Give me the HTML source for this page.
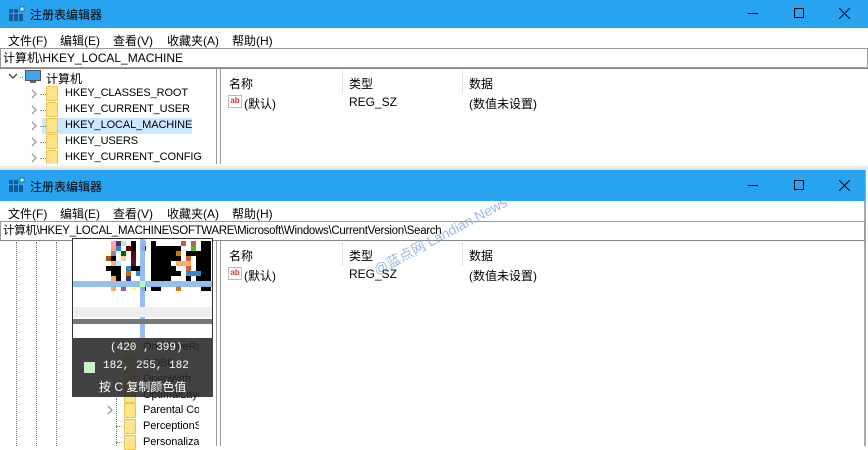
<!DOCTYPE html>
<html><head><meta charset="utf-8"><style>
*{margin:0;padding:0;box-sizing:border-box}
body{width:868px;height:446px;overflow:hidden;background:#fff;font-family:"Liberation Sans","Noto Sans CJK SC",sans-serif;font-size:12px;color:#000;position:relative}
.abs{position:absolute}
.title{background:#27a3ef;height:28px;color:#000}
.title .t{position:absolute;left:30px;top:6px;font-size:12px}
.menu span{position:absolute;top:4px}
.addr{border:1px solid #999;background:#fff;height:19px;white-space:nowrap;overflow:hidden;padding:1px 2px;line-height:16px}
.hdr{position:absolute;font-size:12px}
.sep{position:absolute;width:1px;background:#e5e5e5}
.folder{position:absolute;width:12px;height:15px;background:#fde38a;border:1px solid #e8c553;border-radius:1px}
.chev{position:absolute;width:8px;height:10px}
.dots{position:absolute;border-top:1px dotted #888;width:6px}
.vdots{position:absolute;border-left:1px dotted #777}
.tx{position:absolute;font-size:11px;letter-spacing:-0.1px}
.ab{position:absolute;width:14px;height:13px;border:1px solid #bbb;background:#fff;color:#d33;font-size:8px;font-weight:bold;line-height:10px;text-align:center}
</style></head><body>

<!-- WINDOW 1 -->
<div class="abs title" style="left:0;top:0;width:868px;">
 <svg class="abs" style="left:9px;top:6px" width="16" height="16"><g fill="#1a5a8c"><rect x="0" y="3" width="4" height="4"/><rect x="5" y="3" width="4" height="4"/><rect x="0" y="8" width="4" height="4"/><rect x="5" y="8" width="4" height="4"/><rect x="10" y="8" width="4" height="4"/><rect x="0" y="12" width="4" height="3"/><rect x="5" y="12" width="4" height="3"/><rect x="10" y="12" width="4" height="3"/></g><rect x="11" y="1" width="4" height="4" fill="#cfe" stroke="#1a5a8c" stroke-width=".8"/></svg>
 <span class="t">注册表编辑器</span>
 <div class="abs" style="left:748px;top:13px;width:10px;height:1px;background:#000"></div>
 <div class="abs" style="left:794px;top:8px;width:10px;height:10px;border:1px solid #000"></div>
 <svg class="abs" style="left:839px;top:8px" width="11" height="11"><path d="M0 0L11 11M11 0L0 11" stroke="#000" stroke-width="1"/></svg>
</div>
<div class="abs menu" style="left:0;top:28px;width:868px;height:20px">
 <span style="left:8px">文件(F)</span><span style="left:60px">编辑(E)</span><span style="left:113px">查看(V)</span><span style="left:167px">收藏夹(A)</span><span style="left:232px">帮助(H)</span>
</div>
<div class="abs addr" style="left:0;top:48px;width:868px;height:20px">计算机\HKEY_LOCAL_MACHINE</div>
<div class="abs" style="left:216px;top:68px;width:1px;height:102px;background:#999"></div>
<div class="abs" style="left:220px;top:68px;width:1px;height:102px;background:#999"></div>
<div class="abs" style="left:0;top:68px;width:868px;height:1px;background:#888"></div>
<svg class="abs" style="left:8px;top:73px" width="10" height="8"><path d="M1 1L5 5L9 1" stroke="#444" fill="none" stroke-width="1.3"/></svg>
<div class="dots" style="left:20px;top:77px;width:3px"></div>
<svg class="abs" style="left:25px;top:70px" width="16" height="14"><rect x="0.5" y="0.5" width="15" height="10" fill="#3aa6ee" stroke="#555"/><rect x="5" y="11" width="6" height="2" fill="#666"/></svg>
<span class="abs" style="left:46px;top:70px">计算机</span>
<div class="abs" style="left:42px;top:118px;width:150px;height:16px;background:#cce8ff"></div>
<svg class="chev" style="left:31px;top:89px"><path d="M1 1L5 5L1 9" stroke="#999" fill="none" stroke-width="1.3"/></svg><div class="dots" style="left:40px;top:94px"></div><div class="folder" style="left:46px;top:86px"></div><span class="tx" style="left:65px;top:87px">HKEY_CLASSES_ROOT</span>
<svg class="chev" style="left:31px;top:105px"><path d="M1 1L5 5L1 9" stroke="#999" fill="none" stroke-width="1.3"/></svg><div class="dots" style="left:40px;top:110px"></div><div class="folder" style="left:46px;top:102px"></div><span class="tx" style="left:65px;top:103px">HKEY_CURRENT_USER</span>
<svg class="chev" style="left:31px;top:121px"><path d="M1 1L5 5L1 9" stroke="#999" fill="none" stroke-width="1.3"/></svg><div class="dots" style="left:40px;top:126px"></div><div class="folder" style="left:46px;top:118px"></div><span class="tx" style="left:65px;top:119px">HKEY_LOCAL_MACHINE</span>
<svg class="chev" style="left:31px;top:137px"><path d="M1 1L5 5L1 9" stroke="#999" fill="none" stroke-width="1.3"/></svg><div class="dots" style="left:40px;top:142px"></div><div class="folder" style="left:46px;top:134px"></div><span class="tx" style="left:65px;top:135px">HKEY_USERS</span>
<svg class="chev" style="left:31px;top:153px"><path d="M1 1L5 5L1 9" stroke="#999" fill="none" stroke-width="1.3"/></svg><div class="dots" style="left:40px;top:158px"></div><div class="folder" style="left:46px;top:150px"></div><span class="tx" style="left:65px;top:151px">HKEY_CURRENT_CONFIG</span>
<span class="hdr" style="left:229px;top:75px">名称</span><span class="hdr" style="left:349px;top:75px">类型</span><span class="hdr" style="left:469px;top:75px">数据</span>
<div class="sep" style="left:342px;top:70px;height:24px"></div><div class="sep" style="left:462px;top:70px;height:24px"></div>
<div class="ab" style="left:228px;top:95px">ab</div>
<span class="abs" style="left:244px;top:95px">(默认)</span><span class="abs" style="left:349px;top:95px">REG_SZ</span><span class="abs" style="left:469px;top:95px">(数值未设置)</span>
<div class="abs" style="left:0;top:164px;width:868px;height:6px;background:linear-gradient(#fff,#ddd)"></div>

<!-- WINDOW 2 -->
<div class="abs" style="left:0;top:170px;width:866px;height:276px;background:#fff;border-right:2px solid #aaa"></div>
<div class="abs title" style="left:0;top:170px;width:865px;height:31px">
 <svg class="abs" style="left:9px;top:7px" width="16" height="16"><g fill="#1a5a8c"><rect x="0" y="3" width="4" height="4"/><rect x="5" y="3" width="4" height="4"/><rect x="0" y="8" width="4" height="4"/><rect x="5" y="8" width="4" height="4"/><rect x="10" y="8" width="4" height="4"/><rect x="0" y="12" width="4" height="3"/><rect x="5" y="12" width="4" height="3"/><rect x="10" y="12" width="4" height="3"/></g><rect x="11" y="1" width="4" height="4" fill="#cfe" stroke="#1a5a8c" stroke-width=".8"/></svg>
 <span class="t" style="top:8px">注册表编辑器</span>
 <div class="abs" style="left:748px;top:15px;width:10px;height:1px;background:#000"></div>
 <div class="abs" style="left:794px;top:10px;width:10px;height:10px;border:1px solid #000"></div>
 <svg class="abs" style="left:839px;top:10px" width="11" height="11"><path d="M0 0L11 11M11 0L0 11" stroke="#000" stroke-width="1"/></svg>
</div>
<div class="abs menu" style="left:0;top:201px;width:865px;height:20px">
 <span style="left:8px">文件(F)</span><span style="left:60px">编辑(E)</span><span style="left:113px">查看(V)</span><span style="left:167px">收藏夹(A)</span><span style="left:232px">帮助(H)</span>
</div>
<div class="abs addr" style="left:0;top:221px;width:865px;height:20px;font-size:11.5px;letter-spacing:-0.3px">计算机\HKEY_LOCAL_MACHINE\SOFTWARE\Microsoft\Windows\CurrentVersion\Search</div>
<div class="abs" style="left:0;top:240px;width:865px;height:1px;background:#888"></div>
<div class="abs" style="left:216px;top:241px;width:1px;height:205px;background:#999"></div>
<div class="abs" style="left:220px;top:241px;width:1px;height:205px;background:#999"></div>
<div class="vdots" style="left:16px;top:242px;height:204px"></div>
<div class="vdots" style="left:36px;top:242px;height:204px"></div>
<div class="vdots" style="left:56px;top:242px;height:204px"></div>
<div class="vdots" style="left:116px;top:398px;height:48px"></div>
<div class="folder" style="left:124px;top:356px"></div><span class="tx" style="left:143px;top:341px">OneDriveRa</span>
<div class="folder" style="left:124px;top:372px"></div><span class="tx" style="left:143px;top:357px">OOBE</span>
<span class="tx" style="left:143px;top:373px">OpenWith</span>
<div class="folder" style="left:124px;top:388px"></div><span class="tx" style="left:143px;top:389px">OptimalLayo</span>
<svg class="chev" style="left:107px;top:405px"><path d="M1 1L5 5L1 9" stroke="#999" fill="none" stroke-width="1.3"/></svg><div class="folder" style="left:124px;top:403px"></div><span class="tx" style="left:143px;top:404px">Parental Co</span>
<div class="dots" style="left:116px;top:426px"></div><div class="folder" style="left:124px;top:419px"></div><span class="tx" style="left:143px;top:420px">PerceptionS</span>
<div class="dots" style="left:116px;top:442px"></div><div class="folder" style="left:124px;top:435px"></div><span class="tx" style="left:143px;top:436px">Personalizat</span>
<div class="abs" style="left:199px;top:338px;width:17px;height:108px;background:#fff"></div>
<span class="hdr" style="left:229px;top:247px">名称</span><span class="hdr" style="left:349px;top:247px">类型</span><span class="hdr" style="left:469px;top:247px">数据</span>
<div class="sep" style="left:342px;top:242px;height:24px"></div><div class="sep" style="left:462px;top:242px;height:24px"></div>
<div class="ab" style="left:228px;top:267px">ab</div>
<span class="abs" style="left:244px;top:267px">(默认)</span><span class="abs" style="left:349px;top:267px">REG_SZ</span><span class="abs" style="left:469px;top:267px">(数值未设置)</span>
<span class="abs" style="left:370px;top:262px;color:#7fa7e6;font-size:14px;transform:rotate(-28deg);transform-origin:left top;opacity:.8">@蓝点网 Landian.News</span>

<!-- magnifier -->
<div class="abs" style="left:72px;top:238px;width:141px;height:100px;background:#fff;border:1px solid #333;border-bottom:none;overflow:hidden">
<svg width="141" height="100">
 <g>
  <rect x="38" y="2" width="5" height="5" fill="#f9f"/><rect x="43" y="2" width="5" height="5" fill="#702060"/><rect x="48" y="2" width="5" height="5" fill="#aef"/><rect x="58" y="2" width="5" height="5" fill="#000"/><rect x="68" y="2" width="5" height="5" fill="#80c0e0"/><rect x="78" y="2" width="5" height="5" fill="#000"/><rect x="108" y="2" width="5" height="5" fill="#c06040"/><rect x="118" y="2" width="5" height="5" fill="#c06040"/><rect x="128" y="2" width="10" height="5" fill="#000"/>
  <rect x="38" y="7" width="5" height="5" fill="#fa6"/><rect x="43" y="7" width="5" height="5" fill="#38c"/><rect x="53" y="7" width="5" height="5" fill="#600"/><rect x="58" y="7" width="5" height="5" fill="#000"/><rect x="68" y="7" width="5" height="5" fill="#246"/><rect x="78" y="7" width="30" height="5" fill="#000"/><rect x="118" y="7" width="5" height="5" fill="#6a3"/><rect x="128" y="7" width="10" height="5" fill="#000"/>
  <rect x="33" y="12" width="5" height="5" fill="#ffc"/><rect x="38" y="12" width="5" height="5" fill="#88a"/><rect x="48" y="12" width="5" height="5" fill="#060"/><rect x="58" y="12" width="5" height="5" fill="#600"/><rect x="78" y="12" width="25" height="5" fill="#000"/><rect x="103" y="12" width="5" height="5" fill="#c70"/><rect x="113" y="12" width="15" height="5" fill="#000"/><rect x="128" y="12" width="10" height="5" fill="#000"/>
  <rect x="33" y="17" width="5" height="5" fill="#a50"/><rect x="38" y="17" width="5" height="5" fill="#000"/><rect x="48" y="17" width="5" height="5" fill="#fc9"/><rect x="58" y="17" width="5" height="5" fill="#702"/><rect x="78" y="17" width="30" height="5" fill="#000"/><rect x="113" y="17" width="5" height="5" fill="#c63"/><rect x="123" y="17" width="15" height="5" fill="#000"/>
  <rect x="38" y="22" width="5" height="5" fill="#fa6"/><rect x="43" y="22" width="5" height="5" fill="#aef"/><rect x="58" y="22" width="5" height="5" fill="#325"/><rect x="78" y="22" width="20" height="5" fill="#000"/><rect x="103" y="22" width="15" height="5" fill="#fa6"/><rect x="123" y="22" width="15" height="5" fill="#000"/>
  <rect x="33" y="27" width="15" height="5" fill="#000"/><rect x="53" y="27" width="5" height="5" fill="#38c"/><rect x="58" y="27" width="10" height="5" fill="#000"/><rect x="78" y="27" width="25" height="5" fill="#000"/><rect x="113" y="27" width="5" height="5" fill="#c63"/><rect x="123" y="27" width="15" height="5" fill="#000"/>
  <rect x="38" y="32" width="10" height="5" fill="#000"/><rect x="53" y="32" width="5" height="5" fill="#d60"/><rect x="63" y="32" width="5" height="5" fill="#38c"/><rect x="78" y="32" width="30" height="5" fill="#000"/><rect x="113" y="32" width="15" height="5" fill="#38c"/><rect x="128" y="32" width="10" height="5" fill="#000"/>
  <rect x="38" y="37" width="5" height="5" fill="#fa6"/><rect x="43" y="37" width="5" height="5" fill="#000"/><rect x="53" y="37" width="5" height="5" fill="#336"/><rect x="78" y="37" width="20" height="5" fill="#000"/><rect x="113" y="37" width="5" height="5" fill="#000"/><rect x="123" y="37" width="15" height="5" fill="#000"/>
  <rect x="38" y="47" width="5" height="5" fill="#fa6"/><rect x="48" y="47" width="5" height="5" fill="#a58"/><rect x="58" y="47" width="5" height="5" fill="#ff8"/><rect x="68" y="47" width="5" height="5" fill="#600"/><rect x="78" y="47" width="10" height="5" fill="#000"/><rect x="103" y="47" width="5" height="5" fill="#c70"/><rect x="128" y="47" width="10" height="5" fill="#000"/>
 </g>
 <rect x="0" y="42" width="141" height="6" fill="#8ab8f0" opacity=".9"/>
 <rect x="67" y="0" width="5" height="100" fill="#8ab8f0" opacity=".9"/>
 <rect x="67" y="42" width="5" height="6" fill="#b6ffb6"/>
 <rect x="0" y="68" width="141" height="10" fill="#eee"/>
 <rect x="0" y="80" width="141" height="5" fill="#777"/>
</svg>
</div>
<div class="abs" style="left:72px;top:338px;width:141px;height:59px;background:rgba(40,40,40,.88);color:#fff;font-family:'Liberation Mono','Noto Sans CJK SC',monospace;font-size:11px">
 <span class="abs" style="left:38px;top:4px">(420 , 399)</span>
 <div class="abs" style="left:12px;top:24px;width:11px;height:11px;background:#b6ffb6;border:1px solid #ddd"></div>
 <span class="abs" style="left:31px;top:22px">182, 255, 182</span>
 <span class="abs" style="left:27px;top:40px;font-family:'Liberation Sans','Noto Sans CJK SC',sans-serif;font-size:12px">按 C 复制颜色值</span>
</div>
</body></html>
